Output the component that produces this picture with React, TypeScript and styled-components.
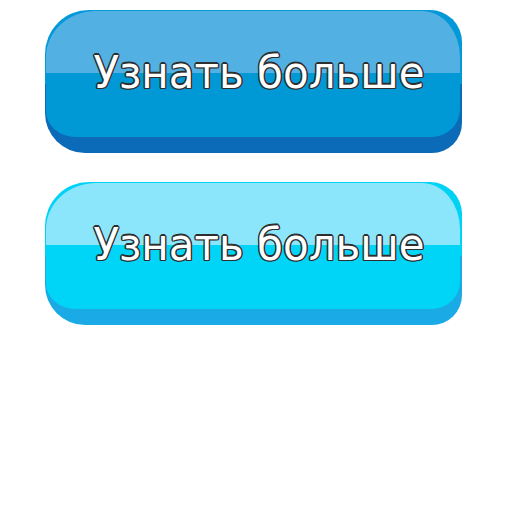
import React from "react";
import styled, { createGlobalStyle } from "styled-components";

const Global = createGlobalStyle`
  html, body { margin: 0; padding: 0; background: #ffffff; }
  body { font-family: "DejaVu Sans", "Liberation Sans", sans-serif; }
`;

type Palette = { outerTop: string; outerBottom: string; light: string; mid: string };

const blue: Palette = { outerTop: "#0399d8", outerBottom: "#0b6bb8", light: "#53b0e3", mid: "#0099d6" };
const cyan: Palette = { outerTop: "#00d2f5", outerBottom: "#1aabe7", light: "#8be6fc", mid: "#00d5f7" };

const Page = styled.div`
  display: flex;
  flex-direction: column;
  gap: 29px;
  padding: 10px 0 0 45px;
`;

const Shell = styled.div<{ $p: Palette }>`
  width: 417px;
  height: 143px;
  box-sizing: border-box;
  padding: 1px 2px 16px 1px;
  border-radius: 44px 32px 30px 40px;
  background: linear-gradient(to bottom, ${(p) => p.$p.outerTop} 0 52%, ${(p) => p.$p.outerBottom} 52% 100%);
  display: flex;
  cursor: pointer;
`;

const Face = styled.div<{ $p: Palette }>`
  flex: 1;
  border-radius: 50px 38px 28px 30px / 46px 46px 28px 26px;
  background: linear-gradient(to bottom, ${(p) => p.$p.light} 0 49%, ${(p) => p.$p.mid} 49% 100%);
  display: flex;
  align-items: center;
  justify-content: center;
  padding: 0 0 4px 12px;
`;

const Label = styled.span`
  display: inline-block;
  transform: scaleY(1.06);
  font-family: "DejaVu Sans", "Liberation Sans", sans-serif;
  font-size: 42px;
  color: #ffffff;
  white-space: nowrap;
  text-shadow:
    1.4px 0 0 #2e2e2e, -1.4px 0 0 #2e2e2e, 0 1.4px 0 #2e2e2e, 0 -1.4px 0 #2e2e2e,
    1px 1px 0 #2e2e2e, -1px -1px 0 #2e2e2e, 1px -1px 0 #2e2e2e, -1px 1px 0 #2e2e2e;
`;

function GlossButton({ palette, text }: { palette: Palette; text: string }) {
  return (
    <Shell $p={palette} role="button">
      <Face $p={palette}>
        <Label>{text}</Label>
      </Face>
    </Shell>
  );
}

export default function App() {
  return (
    <>
      <Global />
      <Page>
        <GlossButton palette={blue} text="Узнать больше" />
        <GlossButton palette={cyan} text="Узнать больше" />
      </Page>
    </>
  );
}
